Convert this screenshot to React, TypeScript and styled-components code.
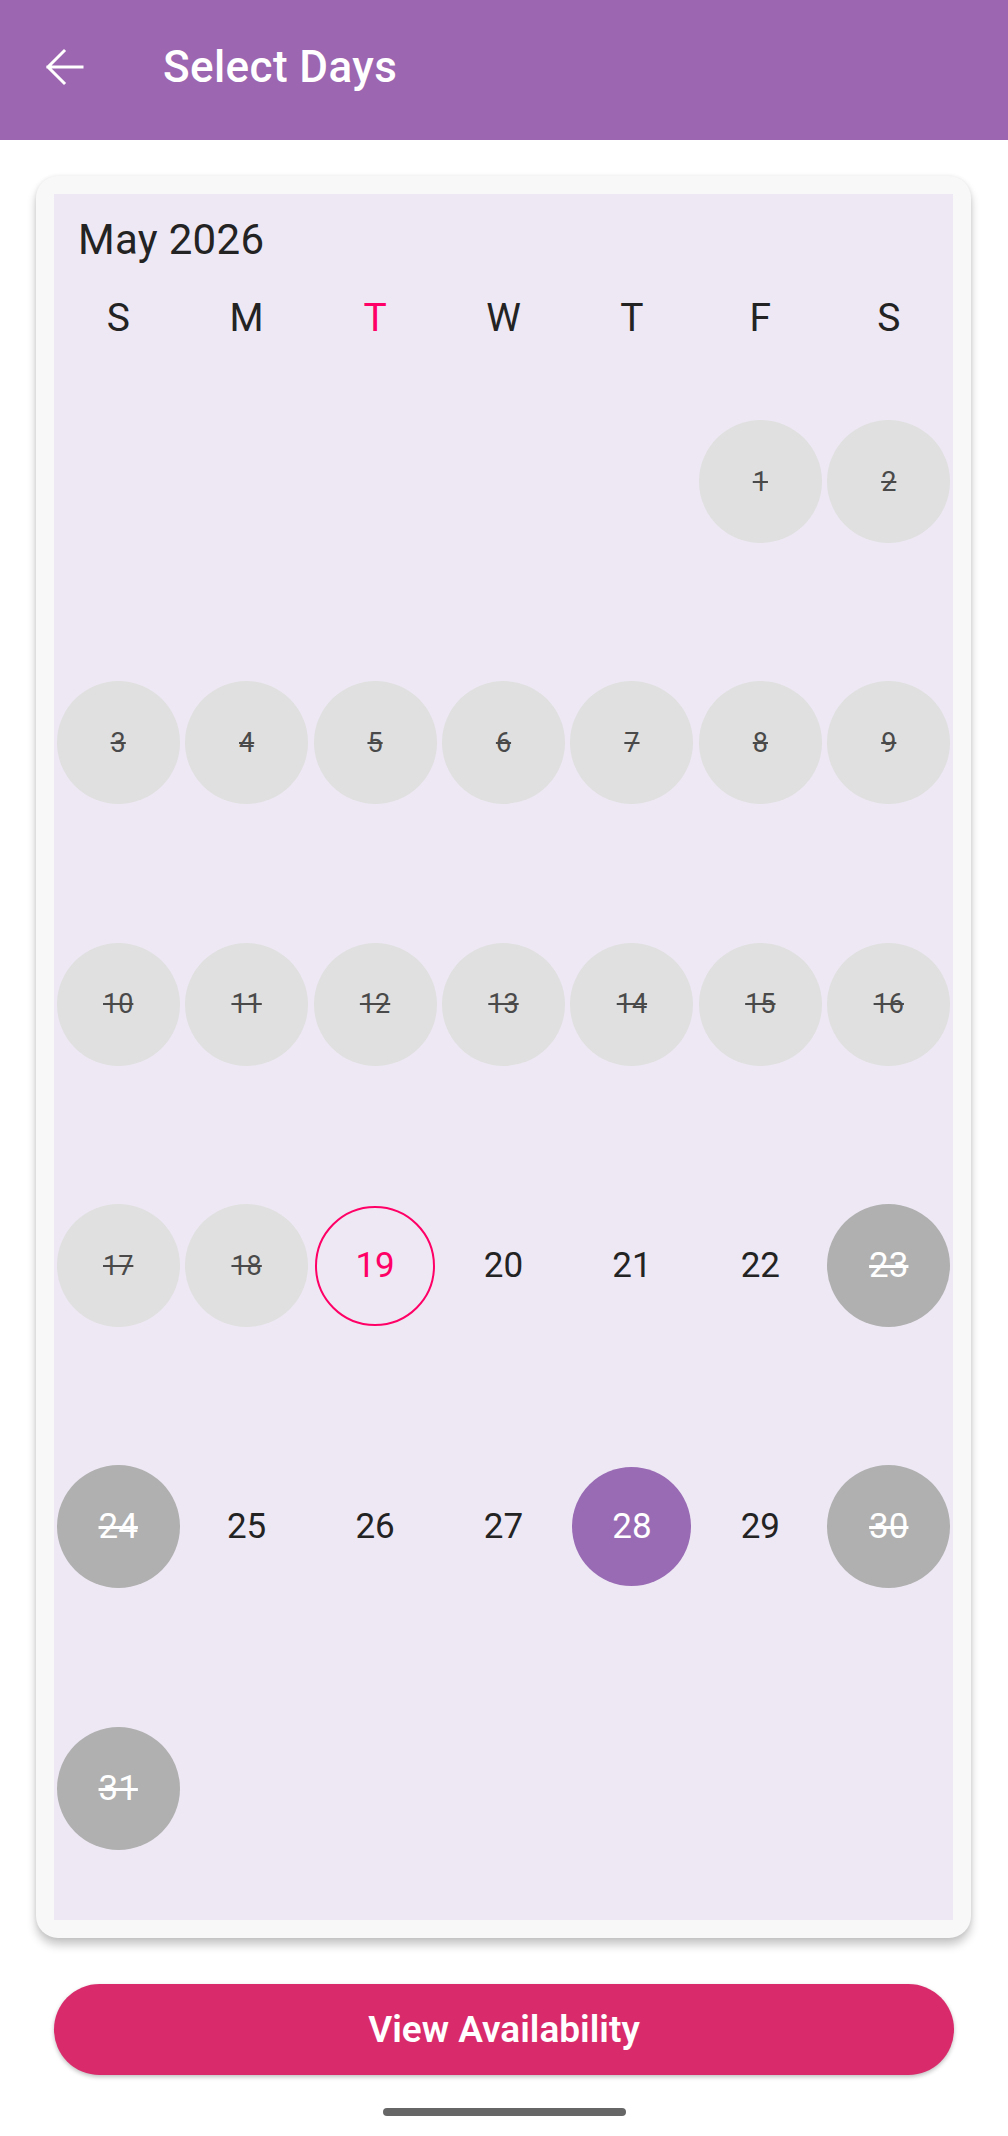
import React from 'react';
import styled, { createGlobalStyle, css } from 'styled-components';

type DayState = 'past' | 'booked' | 'today' | 'selected' | 'open';

interface dayCell {
  day: number;
  state: DayState;
}

const GlobalStyle = createGlobalStyle`
  html, body {
    margin: 0;
    padding: 0;
    background: #ffffff;
  }
  body {
    font-family: Roboto, 'Noto Sans', 'Liberation Sans', sans-serif;
  }
`;

const weekDays = ['S', 'M', 'T', 'W', 'T', 'F', 'S'];
const todayIndex = 2;
const firstOffset = 5;

function stateFor(day: number): DayState {
  if (day < 19) return 'past';
  if (day === 19) return 'today';
  if (day === 28) return 'selected';
  if ([23, 24, 30, 31].includes(day)) return 'booked';
  return 'open';
}

const days: Array<dayCell | null> = [
  ...Array.from({ length: firstOffset }, () => null),
  ...Array.from({ length: 31 }, (_, i) => ({ day: i + 1, state: stateFor(i + 1) })),
];

export default function App() {
  return (
    <Page>
      <GlobalStyle />
      <AppBar>
        <BackButton aria-label="Back">
          <svg width="40" height="40" viewBox="0 0 40 40" fill="none">
            <path
              d="M38 20H4M20 4L4 20l16 16"
              stroke="#ffffff"
              strokeWidth="3"
              strokeLinecap="square"
            />
          </svg>
        </BackButton>
        <Title>Select Days</Title>
      </AppBar>

      <Card>
        <Calendar>
          <MonthLabel>May 2026</MonthLabel>
          <WeekRow>
            {weekDays.map((d, i) => (
              <WeekDay key={i} highlight={i === todayIndex}>
                {d}
              </WeekDay>
            ))}
          </WeekRow>
          <DayGrid>
            {days.map((cell, i) => (
              <DayCellBox key={i}>
                {cell && <DayCircle state={cell.state}>{cell.day}</DayCircle>}
              </DayCellBox>
            ))}
          </DayGrid>
        </Calendar>
      </Card>

      <PrimaryButton>View Availability</PrimaryButton>
      <HomeIndicator />
    </Page>
  );
}

const Page = styled.div`
  width: 1008px;
  height: 2136px;
  display: flex;
  flex-direction: column;
  background: #ffffff;
  overflow: hidden;
`;

const AppBar = styled.header`
  height: 140px;
  flex-shrink: 0;
  display: flex;
  align-items: center;
  background: #9c66b0;
  padding-left: 44px;
  box-sizing: border-box;
`;

const BackButton = styled.div`
  width: 40px;
  height: 40px;
  display: flex;
  margin-top: -6px;
`;

const Title = styled.h1`
  margin: -6px 0 0 79px;
  font-size: 44px;
  font-weight: 500;
  color: #ffffff;
  letter-spacing: 0.4px;
`;

const Card = styled.section`
  margin: 36px 0 0 36px;
  width: 935px;
  padding: 18px;
  box-sizing: border-box;
  background: #f8f8f8;
  border-radius: 22px;
  box-shadow: 0 7px 10px rgba(0, 0, 0, 0.22), 0 0 4px rgba(0, 0, 0, 0.08);
`;

const Calendar = styled.div`
  background: #eee8f4;
  padding-top: 25px;
  padding-bottom: 1px;
`;

const MonthLabel = styled.div`
  padding-left: 24px;
  font-size: 42px;
  line-height: 42px;
  height: 42px;
  color: #232323;
  letter-spacing: 0.3px;
`;

const WeekRow = styled.div`
  margin-top: 38px;
  display: grid;
  grid-template-columns: repeat(7, 1fr);
`;

const WeekDay = styled.div<{ highlight?: boolean }>`
  text-align: center;
  font-size: 39px;
  line-height: 38px;
  height: 38px;
  color: ${(props) => (props.highlight ? '#ff0066' : '#232323')};
`;

const DayGrid = styled.div`
  margin-top: 14px;
  display: grid;
  grid-template-columns: repeat(7, 1fr);
  grid-auto-rows: 261.33px;
`;

const DayCellBox = styled.div`
  display: flex;
  align-items: center;
  justify-content: center;
`;

const circleStyles: Record<DayState, ReturnType<typeof css>> = {
  past: css`
    width: 123px;
    height: 123px;
    background: #e0e0e0;
    color: #4a4a4a;
    font-size: 27px;
    text-decoration: line-through;
  `,
  booked: css`
    width: 123px;
    height: 123px;
    background: #b0b0b0;
    color: #ffffff;
    font-size: 35px;
    text-decoration: line-through;
  `,
  today: css`
    width: 120px;
    height: 120px;
    border: 2px solid #ff0066;
    color: #ff0066;
    font-size: 35px;
  `,
  selected: css`
    width: 119px;
    height: 119px;
    background: #986bb4;
    color: #ffffff;
    font-size: 35px;
  `,
  open: css`
    width: 120px;
    height: 120px;
    color: #232323;
    font-size: 35px;
  `,
};

const DayCircle = styled.div<{ state: DayState }>`
  box-sizing: border-box;
  border-radius: 50%;
  display: flex;
  align-items: center;
  justify-content: center;
  text-decoration-thickness: 1.5px;
  ${(props) => circleStyles[props.state]}
`;

const PrimaryButton = styled.button`
  margin: 46px 0 0 54px;
  width: 900px;
  height: 91px;
  border: none;
  border-radius: 46px;
  background: #d92b6b;
  color: #ffffff;
  font-family: Roboto, 'Noto Sans', sans-serif;
  font-size: 37px;
  font-weight: 600;
  box-shadow: 0 2px 4px rgba(0, 0, 0, 0.25);
  cursor: pointer;
`;

const HomeIndicator = styled.div`
  margin: 33px auto 0;
  width: 243px;
  height: 8px;
  border-radius: 4px;
  background: #666666;
`;
